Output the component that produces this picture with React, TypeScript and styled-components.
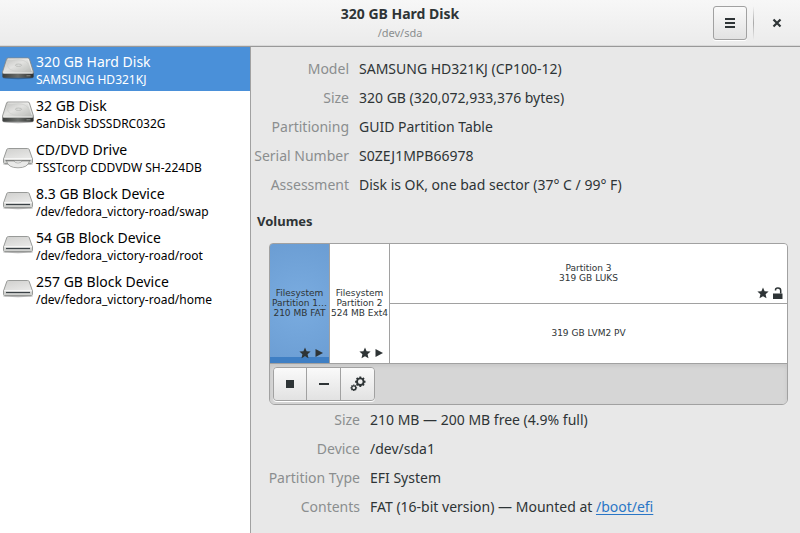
import React from "react";
import styled, { createGlobalStyle, css } from "styled-components";

const INK = "#2e3436";
const LINE = "#a1a1a1";

const GlobalStyle = createGlobalStyle`
  *, *::before, *::after { box-sizing: border-box; }
  body { margin: 0; background: #e8e8e8; }
  body, button {
    font-family: "Noto Sans", "Open Sans", sans-serif;
    font-size: 14px;
    color: ${INK};
  }
`;

const Window = styled.div`
  display: flex;
  flex-direction: column;
  min-height: 100vh;
`;

const HeaderBar = styled.header`
  display: grid;
  grid-template-columns: 1fr auto 1fr;
  align-items: center;
  height: 47px;
  padding: 0 6px;
  background: linear-gradient(#f7f7f7, #ebebeb);
  border-bottom: 1px solid #999;
  box-shadow: inset 0 -1px #d9d9d9;
`;

const TitleBlock = styled.div`
  grid-column: 2;
  text-align: center;
`;

const Title = styled.h1`
  margin: 0;
  font-size: 14px;
  line-height: 20px;
  font-weight: 700;
`;

const Subtitle = styled.div`
  font-size: 11px;
  line-height: 18px;
  color: #8b8e8f;
`;

const HeaderActions = styled.div`
  display: flex;
  justify-content: flex-end;
  align-items: center;
`;

const buttonFace = css`
  display: flex;
  align-items: center;
  justify-content: center;
  width: 34px;
  height: 34px;
  padding: 0;
  color: ${INK};
`;

const MenuButton = styled.button`
  ${buttonFace}
  border: 1px solid ${LINE};
  border-radius: 3px;
  background: linear-gradient(#fafafa, #e2e2e2);
  box-shadow: 0 1px #fff;
`;

const HeaderDivider = styled.span`
  width: 1px;
  height: 34px;
  margin: 0 6px;
  background: linear-gradient(transparent, #a8a8a8 50%, transparent);
`;

const CloseButton = styled.button`
  ${buttonFace}
  border: 0;
  background: none;
`;

const Body = styled.div`
  display: flex;
  flex: 1;
`;

const Sidebar = styled.nav`
  flex: 0 0 251px;
  background: #fff;
  border-right: 1px solid ${LINE};
`;

const DeviceRow = styled.button<{ $selected?: boolean }>`
  display: flex;
  align-items: center;
  gap: 2px;
  width: 100%;
  height: 44px;
  padding: 0 2px;
  border: 0;
  text-align: left;
  white-space: nowrap;
  background: ${(p) => (p.$selected ? "#4a90d9" : "transparent")};
  color: ${(p) => (p.$selected ? "#fff" : "#000")};
`;

const DeviceText = styled.span`
  display: flex;
  flex-direction: column;
  padding-top: 2px;
`;

const DeviceName = styled.span`
  font-size: 14px;
  line-height: 19px;
`;

const DeviceModel = styled.span`
  font-size: 12px;
  line-height: 17px;
`;

const Content = styled.main`
  flex: 1;
  min-width: 0;
  padding: 7px 12px 11px 6px;
`;

const Properties = styled.dl<{ $inset?: boolean }>`
  display: grid;
  grid-template-columns: ${(p) => (p.$inset ? "103px" : "92px")} 1fr;
  column-gap: 10px;
  margin: 0;
  font-size: 14px;
  line-height: 29px;
  white-space: nowrap;
`;

const Label = styled.dt`
  display: flex;
  justify-content: flex-end;
  color: #8b8e8f;
`;

const Value = styled.dd`
  margin: 0;
`;

const Link = styled.a`
  color: #2a76c6;
  text-underline-offset: 2px;
`;

const SectionTitle = styled.h2`
  margin: 12px 0;
  font-size: 13px;
  line-height: 20px;
  font-weight: 700;
`;

const VolumeFrame = styled.section`
  margin-left: 12px;
  border: 1px solid ${LINE};
  border-radius: 4px 4px 6px 6px;
  overflow: hidden;
`;

const VolumeGrid = styled.div`
  display: grid;
  grid-template-columns: 59px 59px 1fr;
  gap: 1px;
  height: 119px;
  background: ${LINE};
`;

const Stack = styled.div`
  display: grid;
  grid-template-rows: 1fr 1fr;
  gap: 1px;
`;

const Volume = styled.button<{ $selected?: boolean }>`
  position: relative;
  display: flex;
  align-items: center;
  justify-content: center;
  min-width: 0;
  padding: 0 0 2px;
  border: 0;
  overflow: hidden;
  font-family: "DejaVu Sans", sans-serif;
  font-size: 9px;
  line-height: 10px;
  text-align: center;
  white-space: nowrap;
  background: ${(p) =>
    p.$selected
      ? "linear-gradient(transparent 113px, #3f7fc4 113px), radial-gradient(circle, #7aace0, #6b9dd3)"
      : "#fff"};
`;

const Badges = styled.span`
  position: absolute;
  right: 4px;
  bottom: 4px;
  display: flex;
  gap: 2px;
`;

const VolumeToolbar = styled.div`
  display: flex;
  height: 41px;
  padding: 3px;
  border-top: 1px solid ${LINE};
  background: #d6d6d6;
  box-shadow: inset 0 2px 4px #c6c6c6;
`;

const ButtonGroup = styled.div`
  display: flex;
  height: 34px;
  border: 1px solid ${LINE};
  border-radius: 4px;
  overflow: hidden;
  box-shadow: 0 1px #fff;
`;

const ToolButton = styled.button`
  ${buttonFace}
  height: 100%;
  border: 0;
  border-right: 1px solid ${LINE};
  background: linear-gradient(#fafafa, #e2e2e2);
  &:first-child { width: 33px; }
  &:last-child { width: 33px; border-right: 0; }
`;

type DriveKind = "disk" | "optical" | "block";

function DriveIcon({ kind }: { kind: DriveKind }) {
  if (kind === "disk") {
    return (
      <svg width="32" height="32" viewBox="0 1.5 32 32" aria-hidden="true">
        <defs>
          <linearGradient id="diskTop" x1="0" y1="0" x2="1" y2="1">
            <stop offset="0" stopColor="#bdbdbb" />
            <stop offset=".45" stopColor="#e2e2e0" />
            <stop offset="1" stopColor="#b4b6b2" />
          </linearGradient>
          <linearGradient id="diskFront" x1="0" x2="1">
            <stop offset="0" stopColor="#3c3e3d" />
            <stop offset=".5" stopColor="#6a6d6a" />
            <stop offset="1" stopColor="#2c2e2d" />
          </linearGradient>
        </defs>
        <ellipse cx="16" cy="26.3" rx="15.5" ry="1.4" fill="#000" opacity=".3" />
        <path d="M.4 21.5h31.200v3.300q0 1.500-1.500 1.500H2Q.4 26.300.4 24.800z" fill="url(#diskFront)" />
        <path d="M6 6.500h20q1 0 1.400.9L31.500 20.500q.2 1.500-1 1.500h-29Q.2 22 .5 20.500L4.600 7.400Q5 6.500 6 6.500z" fill="url(#diskTop)" stroke="#858784" strokeWidth=".8" />
        <path d="M6 7.500h20L30.200 20" fill="none" stroke="#f2f2f1" strokeWidth=".7" />
        <ellipse cx="16" cy="14" rx="10.500" ry="5.800" fill="none" stroke="#cdcfcb" strokeWidth=".7" />
        <ellipse cx="16.500" cy="13.700" rx="3.200" ry="1.200" fill="#dcdddb" stroke="#a9aba7" strokeWidth=".6" />
        <path d="M1.500 21.500h29" stroke="#f3f3f2" strokeWidth=".9" />
        <path d="M24.500 24.300h4" stroke="#9da09b" strokeWidth=".8" />
      </svg>
    );
  }
  return (
    <svg width="32" height="32" viewBox="0 2 32 32" aria-hidden="true">
      <defs>
        <linearGradient id="caseTop" x1="0" y1="0" x2=".4" y2="1">
          <stop offset="0" stopColor="#cfcfcd" />
          <stop offset="1" stopColor="#ededec" />
        </linearGradient>
      </defs>
      <ellipse cx="16" cy="25" rx="15" ry="1.200" fill="#000" opacity=".3" />
      <path d="M6.500 9.500h19q1.300 0 1.700 1L30.500 20v3.500q0 1-1 1h-27q-1 0-1-1V20l3.300-9.500q.4-1 1.700-1z" fill="url(#caseTop)" stroke="#8f918e" strokeWidth=".9" />
      <path d="M2 20.500h28v3.500H2z" fill="#d0d1cf" />
      <path d="M2.200 19.700h27.600" stroke="#fff" strokeWidth=".8" />
      {kind === "block" ? (
        <path d="M4 21.500h24" stroke="#3a4145" strokeWidth="1.200" />
      ) : (
        <>
          <path d="M3.500 21.500h25" stroke="#77797a" strokeWidth="1" />
          <path d="M4.500 22q1.500 6.800 11.500 6.800T27.500 22z" fill="#e9e9e8" stroke="#8f918e" strokeWidth=".8" />
          <path d="M12 22q.8 2 4 2t4-2z" fill="#fff" stroke="#a4a6a3" strokeWidth=".8" />
        </>
      )}
    </svg>
  );
}

const Star = () => (
  <svg width="12" height="12" viewBox="0 0 12 12" aria-hidden="true">
    <path d="M6 .5l1.600 3.700 4 .3-3 2.700.9 4L6 9.200l-3.500 2 .9-4-3-2.700 4-.3z" fill={INK} />
  </svg>
);

const Play = () => (
  <svg width="12" height="12" viewBox="0 0 12 12" aria-hidden="true">
    <path d="M2.500 2v8L10 6z" fill={INK} />
  </svg>
);

const Unlocked = () => (
  <svg width="12" height="12" viewBox="0 0 12 12" aria-hidden="true">
    <path d="M2 6.500h9.500V12H2z" fill={INK} />
    <path d="M4.500 3.500V3q0-2 2.200-2h.3q2.700 0 2.700 2.500v3" fill="none" stroke={INK} strokeWidth="1.500" />
  </svg>
);

const gearTeeth = [0, 45, 90, 135, 180, 225, 270, 315];

function Gear({ x, y, r, w }: { x: number; y: number; r: number; w: number }) {
  return (
    <g transform={`translate(${x} ${y})`} stroke={INK} fill="none">
      <circle r={r} strokeWidth={w} />
      {gearTeeth.map((a) => (
        <path key={a} d={`M0 ${-r}V${-r - w}`} strokeWidth={w} transform={`rotate(${a})`} />
      ))}
    </g>
  );
}

const Gears = () => (
  <svg width="16" height="16" viewBox="0 0 16 16" aria-hidden="true">
    <Gear x={10.3} y={5.7} r={3.3} w={1.9} />
    <Gear x={3.8} y={11.8} r={2} w={1.3} />
  </svg>
);

const devices: { name: string; model: string; kind: DriveKind }[] = [
  { name: "320 GB Hard Disk", model: "SAMSUNG HD321KJ", kind: "disk" },
  { name: "32 GB Disk", model: "SanDisk SDSSDRC032G", kind: "disk" },
  { name: "CD/DVD Drive", model: "TSSTcorp CDDVDW SH-224DB", kind: "optical" },
  { name: "8.3 GB Block Device", model: "/dev/fedora_victory-road/swap", kind: "block" },
  { name: "54 GB Block Device", model: "/dev/fedora_victory-road/root", kind: "block" },
  { name: "257 GB Block Device", model: "/dev/fedora_victory-road/home", kind: "block" },
];

const driveInfo = [
  ["Model", "SAMSUNG HD321KJ (CP100-12)"],
  ["Size", "320 GB (320,072,933,376 bytes)"],
  ["Partitioning", "GUID Partition Table"],
  ["Serial Number", "S0ZEJ1MPB66978"],
  ["Assessment", "Disk is OK, one bad sector (37° C / 99° F)"],
];

const volumeInfo: [string, React.ReactNode][] = [
  ["Size", "210 MB — 200 MB free (4.9% full)"],
  ["Device", "/dev/sda1"],
  ["Partition Type", "EFI System"],
  ["Contents", <>FAT (16-bit version) — Mounted at <Link href="#efi">/boot/efi</Link></>],
];

export default function App() {
  return (
    <Window>
      <GlobalStyle />
      <HeaderBar>
        <TitleBlock>
          <Title>320 GB Hard Disk</Title>
          <Subtitle>/dev/sda</Subtitle>
        </TitleBlock>
        <HeaderActions>
          <MenuButton aria-label="Menu">
            <svg width="16" height="16" viewBox="0 0 16 16" aria-hidden="true">
              <path d="M3 4h10M3 8h10M3 12h10" stroke={INK} strokeWidth="2" />
            </svg>
          </MenuButton>
          <HeaderDivider />
          <CloseButton aria-label="Close">
            <svg width="16" height="16" viewBox="0 0 16 16" aria-hidden="true">
              <path d="M4.500 4.500l7 7M11.500 4.500l-7 7" stroke={INK} strokeWidth="2.200" />
            </svg>
          </CloseButton>
        </HeaderActions>
      </HeaderBar>
      <Body>
        <Sidebar aria-label="Devices">
          {devices.map((d, i) => (
            <DeviceRow key={d.name} $selected={i === 0}>
              <DriveIcon kind={d.kind} />
              <DeviceText>
                <DeviceName>{d.name}</DeviceName>
                <DeviceModel>{d.model}</DeviceModel>
              </DeviceText>
            </DeviceRow>
          ))}
        </Sidebar>
        <Content>
          <Properties>
            {driveInfo.map(([label, value]) => (
              <React.Fragment key={label}>
                <Label>{label}</Label>
                <Value>{value}</Value>
              </React.Fragment>
            ))}
          </Properties>
          <SectionTitle>Volumes</SectionTitle>
          <VolumeFrame aria-label="Volumes">
            <VolumeGrid>
              <Volume $selected>
                <span>Filesystem<br />Partition 1…<br />210 MB FAT</span>
                <Badges><Star /><Play /></Badges>
              </Volume>
              <Volume>
                <span>Filesystem<br />Partition 2<br />524 MB Ext4</span>
                <Badges><Star /><Play /></Badges>
              </Volume>
              <Stack>
                <Volume>
                  <span>Partition 3<br />319 GB LUKS</span>
                  <Badges><Star /><Unlocked /></Badges>
                </Volume>
                <Volume>319 GB LVM2 PV</Volume>
              </Stack>
            </VolumeGrid>
            <VolumeToolbar>
              <ButtonGroup>
                <ToolButton aria-label="Unmount">
                  <svg width="16" height="16" viewBox="0 0 16 16" aria-hidden="true">
                    <path d="M4 4h8v8H4z" fill={INK} />
                  </svg>
                </ToolButton>
                <ToolButton aria-label="Delete partition">
                  <svg width="16" height="16" viewBox="0 0 16 16" aria-hidden="true">
                    <path d="M3 7h10v2H3z" fill={INK} />
                  </svg>
                </ToolButton>
                <ToolButton aria-label="More actions"><Gears /></ToolButton>
              </ButtonGroup>
            </VolumeToolbar>
          </VolumeFrame>
          <Properties $inset>
            {volumeInfo.map(([label, value]) => (
              <React.Fragment key={label}>
                <Label>{label}</Label>
                <Value>{value}</Value>
              </React.Fragment>
            ))}
          </Properties>
        </Content>
      </Body>
    </Window>
  );
}
